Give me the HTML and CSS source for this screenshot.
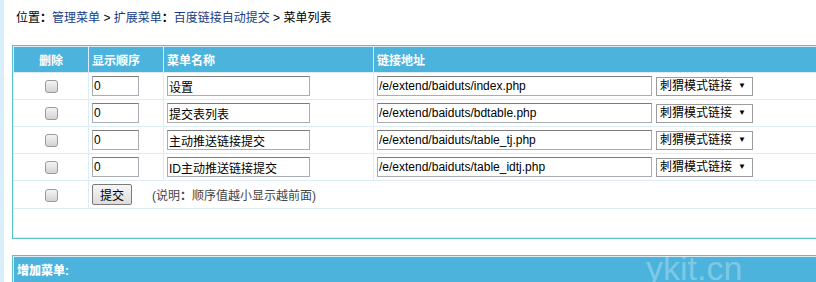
FILE: index.html
```html
<!DOCTYPE html>
<html lang="zh-CN">
<head>
<meta charset="utf-8">
<title>菜单列表</title>
<link rel="stylesheet" href="styles.css">
</head>
<body>
<div class="page">
  <div class="crumb">位置<span class="colon">：</span><a href="#">管理菜单</a> &gt; <a href="#">扩展菜单</a><span class="colon">：</span><a href="#">百度链接自动提交</a> &gt; 菜单列表</div>

  <table class="grid list">
    <tr class="head">
      <td class="c1 center">删除</td>
      <td class="c2">显示顺序</td>
      <td class="c3">菜单名称</td>
      <td>链接地址</td>
    </tr>
    <tr>
      <td class="center"><input type="checkbox" class="chk"></td>
      <td><input class="txt order" value="0"></td>
      <td><input class="txt name" value="设置"></td>
      <td><input class="txt url" value="/e/extend/baiduts/index.php"><span class="sel">刺猬模式链接<span class="arr">▼</span></span></td>
    </tr>
    <tr>
      <td class="center"><input type="checkbox" class="chk"></td>
      <td><input class="txt order" value="0"></td>
      <td><input class="txt name" value="提交表列表"></td>
      <td><input class="txt url" value="/e/extend/baiduts/bdtable.php"><span class="sel">刺猬模式链接<span class="arr">▼</span></span></td>
    </tr>
    <tr>
      <td class="center"><input type="checkbox" class="chk"></td>
      <td><input class="txt order" value="0"></td>
      <td><input class="txt name" value="主动推送链接提交"></td>
      <td><input class="txt url" value="/e/extend/baiduts/table_tj.php"><span class="sel">刺猬模式链接<span class="arr">▼</span></span></td>
    </tr>
    <tr>
      <td class="center"><input type="checkbox" class="chk"></td>
      <td><input class="txt order" value="0"></td>
      <td><input class="txt name" value="ID主动推送链接提交"></td>
      <td><input class="txt url" value="/e/extend/baiduts/table_idtj.php"><span class="sel">刺猬模式链接<span class="arr">▼</span></span></td>
    </tr>
    <tr>
      <td class="center"><input type="checkbox" class="chk"></td>
      <td colspan="3"><button class="btn" type="button">提交</button><span class="note">(说明<span class="colon">：</span>顺序值越小显示越前面)</span></td>
    </tr>
    <tr>
      <td colspan="4" class="blank"></td>
    </tr>
  </table>

  <table class="grid add">
    <tr class="head">
      <td><b>增加菜单:</b></td>
    </tr>
  </table>
</div>
<span class="mark">ykit.cn</span>
</body>
</html>
```

FILE: styles.css
```css
html {
  overflow: hidden;
}

body {
  margin: 0;
  background: #ffffff;
  font-family: "Liberation Sans", "Noto Sans CJK SC", sans-serif;
  font-size: 12px;
  color: #000;
}

.page {
  border-left: 4px solid #d8eef9;
  min-height: 282px;
  padding-left: 8px;
  padding-top: 10px;
}

.crumb {
  height: 14px;
  line-height: 14px;
  padding-left: 4px;
  margin-bottom: 21px;
}

.crumb a {
  color: #173c86;
  text-decoration: none;
}

.colon {
  font-family: "Noto Sans CJK TC", "Noto Sans CJK SC", sans-serif;
  font-weight: bold;
}

.grid {
  width: 900px;
  border: 1px solid #5cc0c9;
  border-collapse: separate;
  border-spacing: 1px;
  background: #dcedf6;
}

.grid td {
  background: #ffffff;
  padding: 3px;
  height: 20px;
  vertical-align: middle;
  white-space: nowrap;
}

.grid .head td {
  background: #4cb3dd;
  color: #ffffff;
  font-weight: bold;
  height: 19px;
}

.c1 { width: 68px; }
.c2 { width: 68px; }
.c3 { width: 203px; }

.center {
  text-align: center;
}

.chk {
  appearance: none;
  -webkit-appearance: none;
  width: 13px;
  height: 13px;
  margin: 0;
  border: 1px solid #9a9a9a;
  border-radius: 3px;
  background: linear-gradient(#f4f4f4, #d3d3d3);
  vertical-align: middle;
}

.txt {
  box-sizing: border-box;
  height: 20px;
  margin: 0;
  padding: 0 1px;
  border: 1px solid #a9adb3;
  border-top-color: #7c7c7c;
  font: 12px "Liberation Sans", "Noto Sans CJK SC", sans-serif;
  color: #000;
  vertical-align: middle;
  background: #fff;
}

.order { width: 47px; }
.name { width: 143px; }
.url { width: 275px; }

.sel {
  display: inline-block;
  box-sizing: border-box;
  width: 97px;
  height: 19px;
  line-height: 17px;
  margin-left: 4px;
  padding-left: 3px;
  border: 1px solid #9c9c9c;
  vertical-align: middle;
  position: relative;
}

.arr {
  position: absolute;
  right: 6px;
  top: 0;
  font-size: 8px;
  line-height: 15px;
}

.btn {
  box-sizing: border-box;
  width: 40px;
  height: 21px;
  margin: 0;
  padding: 0;
  border: 1px solid #7a7a7a;
  border-radius: 2px;
  background: linear-gradient(#f6f6f6, #dcdcdc);
  font: 12px "Liberation Sans", "Noto Sans CJK SC", sans-serif;
  color: #000;
  vertical-align: middle;
}

.note {
  margin-left: 20px;
  color: #444;
  vertical-align: middle;
}

.grid td.blank {
  height: 22px;
}

.add {
  margin-top: 16px;
}

.mark {
  position: absolute;
  left: 646px;
  top: 254px;
  font-family: "Liberation Sans", sans-serif;
  font-size: 34px;
  line-height: 28px;
  color: rgba(255, 255, 255, 0.3);
}
```
